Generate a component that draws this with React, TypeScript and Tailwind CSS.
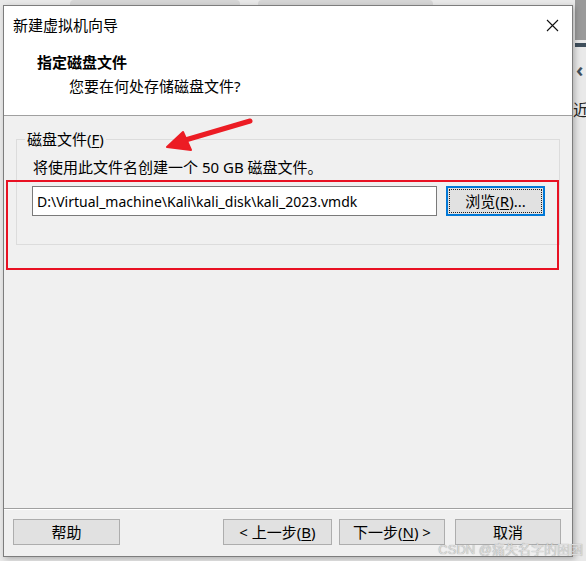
import React from "react";

const ui = { fontFamily: '"Noto Sans", "Noto Sans CJK SC", sans-serif' };

function WinButton({ label, w, className = "" }: { label: React.ReactNode; w: string; className?: string }) {
  return (
    <div
      className={`${w} h-[26px] flex items-center justify-center bg-[#e1e1e1] border border-[#adadad] text-[15px] text-black leading-none ${className}`}
    >
      {label}
    </div>
  );
}

export default function App() {
  return (
    <div className="relative w-[586px] h-[561px] overflow-hidden bg-[#e9e9e9]" style={ui}>
      {/* desktop background behind the dialog */}
      <div className="absolute left-[70px] top-0 w-[170px] h-[5px] rounded-t bg-[#d6d6d6]" />
      <div className="absolute left-[258px] top-0 w-[175px] h-[5px] rounded-t bg-[#d6d6d6]" />
      <div className="absolute left-[575px] top-0 w-[11px] h-[40px] bg-[#9a9a9a]" />
      <div className="absolute left-[575px] top-[43px] w-[11px] h-[4px] bg-[#3f4f5c]" />
      <div className="absolute left-[576px] top-[60px] text-[20px] font-bold leading-none text-[#3f4f5c]">‹</div>
      <div className="absolute left-[573px] top-[101px] text-[16px] leading-none text-[#222]" style={{ fontFamily: '"Noto Sans CJK SC", sans-serif' }}>
        近
      </div>

      {/* dialog window */}
      <div className="absolute left-[3px] top-[5px] w-[570px] h-[552px] border border-[#7d7d7d] bg-[#f0f0f0] flex flex-col shadow-[2px_2px_6px_rgba(0,0,0,0.25)]">
        <div className="bg-white">
          <div className="h-[38px] flex items-center justify-between pl-[9px] pr-[13px]">
            <span className="text-[15px] text-black">新建虚拟机向导</span>
            <svg width="13" height="13" viewBox="0 0 13 13">
              <path d="M1 1L12 12M12 1L1 12" stroke="#111" strokeWidth="1.1" />
            </svg>
          </div>
          <div className="h-[72px] pt-[8px] flex flex-col gap-[4px] border-b border-[#a0a0a0]">
            <div className="pl-[33px] h-[20px] leading-[20px] text-[15px] font-bold text-black">指定磁盘文件</div>
            <div className="pl-[65px] h-[20px] leading-[20px] text-[15px] text-black">您要在何处存储磁盘文件?</div>
          </div>
        </div>

        {/* body */}
        <div className="flex-1 pt-[23px] pl-[12px]">
          <div className="relative w-[544px] h-[106px] border border-[#dcdcdc]">
            <div className="absolute left-[8px] -top-[12px] px-[2px] bg-[#f0f0f0] text-[15px] leading-[22px] text-black">
              磁盘文件(<span className="underline underline-offset-2">F</span>)
            </div>
            <div className="pl-[16px] pt-[16px] text-[15px] leading-[22px] text-black">
              将使用此文件名创建一个 50 GB 磁盘文件。
            </div>
            <div className="flex items-center pl-[15px] mt-[8px] gap-[9px]">
              <div className="w-[405px] h-[30px] bg-white border border-[#7a7a7a] flex items-center pl-[4px] text-[14px] text-black whitespace-nowrap overflow-hidden">
                D:\Virtual_machine\Kali\kali_disk\kali_2023.vmdk
              </div>
              <div className="w-[99px] h-[30px] border-2 border-[#0078d7] bg-[#e1e1e1] p-[1px]">
                <div className="w-full h-full border border-dotted border-[#222] flex items-center justify-center text-[15px] text-black leading-none">
                  浏览(<span className="underline underline-offset-2">R</span>)...
                </div>
              </div>
            </div>
          </div>
        </div>

        {/* footer */}
        <div className="h-[48px] border-t border-[#a0a0a0] shadow-[inset_0_1px_0_#ffffff] flex items-center pl-[9px] pb-[1px]">
          <WinButton w="w-[107px]" label="帮助" />
          <WinButton w="w-[109px]" className="ml-[103px]" label={<>&lt; 上一步(<span className="underline underline-offset-2">B</span>)</>} />
          <WinButton w="w-[106px]" className="ml-[7px]" label={<>下一步(<span className="underline underline-offset-2">N</span>) &gt;</>} />
          <WinButton w="w-[106px]" className="ml-[10px]" label="取消" />
        </div>
      </div>

      {/* red annotation box */}
      <div className="absolute left-[6px] top-[180px] w-[553px] h-[90px] border-2 border-[#e81123]" />

      {/* red annotation arrow */}
      <svg className="absolute left-0 top-0" width="586" height="561" viewBox="0 0 586 561">
        <path d="M250 121 L182 141" stroke="#ec1c24" strokeWidth="5" strokeLinecap="round" />
        <path d="M167 147 L183 132 L191 150 Z" fill="#ec1c24" stroke="#ec1c24" strokeWidth="2" strokeLinejoin="round" />
      </svg>

      {/* watermark */}
      <div
        className="absolute right-[3px] bottom-[5px] text-[13px] leading-none text-[#dcdcdc]"
        style={{ fontFamily: '"Liberation Sans", "Noto Sans CJK SC", sans-serif', textShadow: "0 0 1px #8a8a8a" }}
      >
        CSDN @痛失名字的困困
      </div>
    </div>
  );
}
